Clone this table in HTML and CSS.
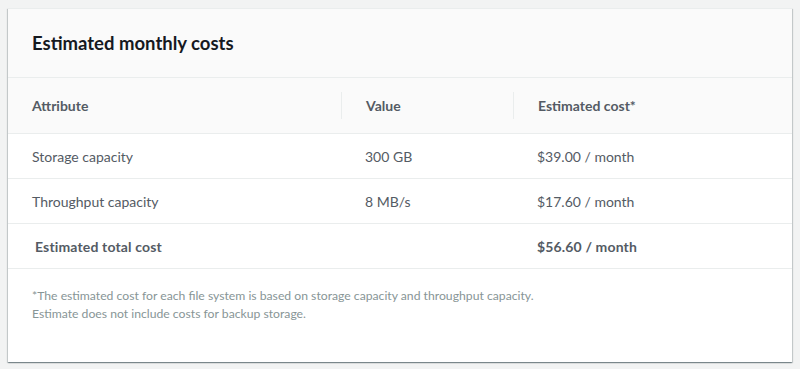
FILE: index.html
```html
<!DOCTYPE html>
<html lang="en">
<head>
    <meta charset="UTF-8">
    <meta name="viewport" content="width=device-width, initial-scale=1.0">
    <title>Estimated monthly costs</title>
    <link rel="stylesheet" href="styles.css">
</head>
<body>
    <div class="card">
        <div class="card-header">
            <h2>Estimated monthly costs</h2>
        </div>

        <table class="costs">
            <thead>
                <tr>
                    <th class="col-attr"><span>Attribute</span></th>
                    <th class="col-value"><span>Value</span></th>
                    <th class="col-cost"><span>Estimated cost*</span></th>
                </tr>
            </thead>
            <tbody>
                <tr>
                    <td>Storage capacity</td>
                    <td>300 GB</td>
                    <td>$39.00 / month</td>
                </tr>
                <tr>
                    <td>Throughput capacity</td>
                    <td>8 MB/s</td>
                    <td>$17.60 / month</td>
                </tr>
                <tr class="total">
                    <td><strong>Estimated total cost</strong></td>
                    <td></td>
                    <td><strong>$56.60 / month</strong></td>
                </tr>
            </tbody>
        </table>

        <div class="card-footer">
            <p>*The estimated cost for each file system is based on storage capacity and throughput capacity.</p>
            <p>Estimate does not include costs for backup storage.</p>
        </div>
    </div>
</body>
</html>
```

FILE: styles.css
```css
body {
    font-family: Lato, "Open Sans", Arial, sans-serif;
    margin: 0;
    padding: 8px;
    background-color: #f2f3f3;
    color: #545b64;
}

.card {
    background-color: #fff;
    border-top: 1px solid #eaeded;
    box-shadow: 0 1px 1px 0 rgba(0,28,36,0.3), 1px 1px 1px 0 rgba(0,28,36,0.15), -1px 1px 1px 0 rgba(0,28,36,0.15);
    height: 353px;
    display: flex;
    flex-direction: column;
}

.card-header {
    background-color: #fafafa;
    border-bottom: 1px solid #eaeded;
    padding: 0 24px;
    height: 68px;
    display: flex;
    align-items: center;
}

.card-header h2 {
    margin: 0;
    font-size: 18.5px;
    font-weight: bold;
    color: #16191f;
}

.costs {
    width: 100%;
    border-collapse: collapse;
    table-layout: fixed;
    font-size: 14px;
}

.col-attr {
    width: 333px;
}

.col-value {
    width: 172px;
}

.costs th {
    background-color: #fafafa;
    height: 55px;
    padding: 0;
    text-align: left;
    font-weight: bold;
    color: #545b64;
    border-bottom: 1px solid #eaeded;
}

.costs th span {
    display: block;
    padding: 3px 24px;
    line-height: 21px;
}

.costs th + th span {
    border-left: 1px solid #eaeded;
}

.costs td {
    height: 44px;
    padding: 0 24px;
    border-bottom: 1px solid #eaeded;
    color: #545b64;
}

.costs strong {
    letter-spacing: 0.15px;
}

.total td:first-child {
    padding-left: 27px;
}

.card-footer {
    padding: 18px 24px;
    font-size: 12.2px;
    line-height: 18px;
    color: #879596;
}

.card-footer p {
    margin: 0;
}
```
